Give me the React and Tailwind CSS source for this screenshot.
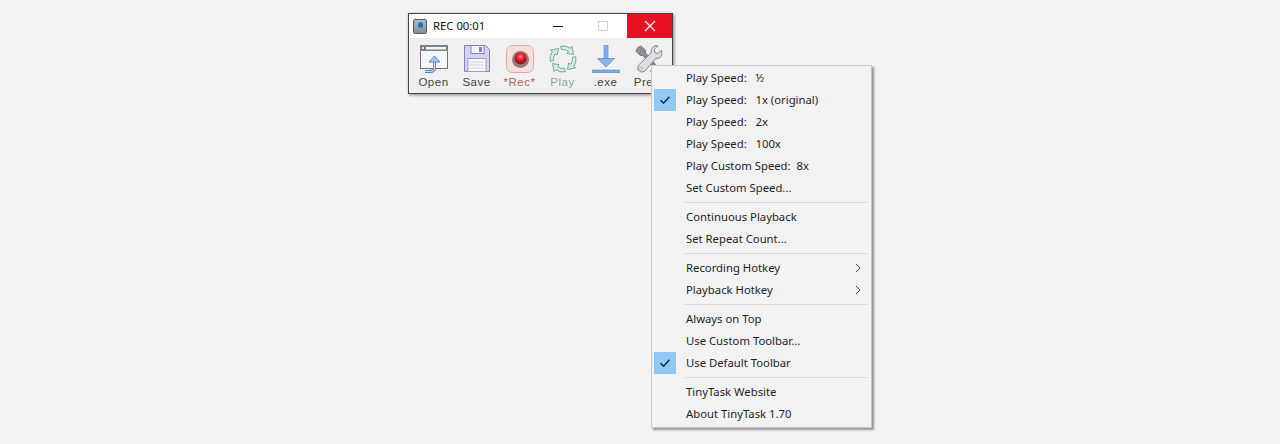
import React from "react";

function Check() {
  return (
    <svg width="22" height="22" viewBox="0 0 22 22" className="block">
      <path d="M6.5 11.2 L9.6 14.2 L15.4 7.8" fill="none" stroke="#12304f" strokeWidth="1.6" />
    </svg>
  );
}

function Item({ label, checked, arrow }) {
  return (
    <div className="flex h-[22px] items-center pl-[2px] pr-[10px]">
      <div className={`h-[22px] w-[22px] shrink-0 ${checked ? "bg-[#90c8f6]" : ""}`}>{checked ? <Check /> : null}</div>
      <span className="ml-[10px] flex-1 whitespace-pre text-[11.3px] leading-[22px] text-[#1f1f1f]">{label}</span>
      {arrow ? (
        <svg width="6" height="10" viewBox="0 0 6 10" className="block">
          <path d="M1 1 L5 5 L1 9" fill="none" stroke="#444" strokeWidth="1" />
        </svg>
      ) : null}
    </div>
  );
}

function Sep() {
  return (
    <div className="flex h-[7px] items-center pl-[33px] pr-[3px]">
      <div className="h-px w-full bg-[#dadada]" />
    </div>
  );
}

function Tool({ label, color, children }) {
  return (
    <div className="flex w-[43px] shrink-0 flex-col items-center">
      <div className="h-[28px] w-[28px]">{children}</div>
      <span className={`mt-[2px] whitespace-nowrap font-['Liberation_Sans',sans-serif] text-[11.5px] leading-[14px] tracking-[0.5px] ${color}`}>{label}</span>
    </div>
  );
}

const OpenIcon = (
  <svg width="28" height="28" viewBox="0 0 28 28">
    <rect x="0.5" y="0.5" width="27" height="23" fill="#f6f6f6" stroke="#6a727c" strokeWidth="1" />
    <rect x="0" y="0" width="28" height="6" fill="#79818a" />
    <rect x="6" y="2" width="20" height="2.5" fill="#f6f6f6" />
    <rect x="2" y="2" width="2" height="2" fill="#e0e0e0" />
    <path d="M5 26.5 H10 Q14.5 26.5 14.5 22 V16" fill="none" stroke="#4f80c4" strokeWidth="3" />
    <path d="M5 26.5 H10 Q14.5 26.5 14.5 22 V16" fill="none" stroke="#cfe0f6" strokeWidth="1.2" />
    <path d="M9 17 L14.5 11 L20 17 Z" fill="#a8c8f0" stroke="#4f80c4" strokeWidth="0.9" />
  </svg>
);
const SaveIcon = (
  <svg width="28" height="28" viewBox="0 0 28 28">
    <path d="M1.5 0.5 H22.5 L26.5 4.5 V26.5 H1.5 Z" fill="#d3d2f3" stroke="#8484bb" strokeWidth="1" />
    <rect x="8" y="0.5" width="13" height="8" fill="#f4f4fb" stroke="#8484bb" strokeWidth="1" />
    <rect x="16" y="2" width="3" height="5" fill="#8a8ac2" />
    <rect x="5" y="13.5" width="18" height="13" fill="#fafafa" stroke="#9a9aca" strokeWidth="1" />
    <path d="M7 17 H21 M7 20 H21 M7 23 H21" stroke="#c8d0d8" strokeWidth="1" />
  </svg>
);
const RecIcon = (
  <svg width="28" height="28" viewBox="0 0 28 28">
    <defs>
      <radialGradient id="recg" cx="50%" cy="35%" r="60%">
        <stop offset="0%" stopColor="#ff9a9a" />
        <stop offset="45%" stopColor="#e81c2c" />
        <stop offset="100%" stopColor="#8e1018" />
      </radialGradient>
    </defs>
    <rect x="0.5" y="0.5" width="27" height="27" rx="6" fill="#fbdedb" stroke="#d8aeac" strokeWidth="1" />
    <circle cx="14.5" cy="14.5" r="8.5" fill="#8f7d78" />
    <circle cx="14.5" cy="13.5" r="6" fill="url(#recg)" />
  </svg>
);
const arcArrow = "M11.7 1.2 A13 13 0 0 1 21.5 3.4 L22.9 1.3 L24.5 9.5 L18 8.3 L19.4 6.2 A9.5 9.5 0 0 0 12.3 4.6 Z";
const PlayIcon = (
  <svg width="28" height="28" viewBox="0 0 28 28" fill="#d6ecdf" stroke="#7dab96" strokeWidth="1">
    <path d={arcArrow} />
    <path d={arcArrow} transform="rotate(90 14 14)" />
    <path d={arcArrow} transform="rotate(180 14 14)" />
    <path d={arcArrow} transform="rotate(270 14 14)" />
  </svg>
);
const ExeIcon = (
  <svg width="28" height="28" viewBox="0 0 28 28">
    <rect x="12" y="0.5" width="4" height="14" fill="#7eaee6" stroke="#6a93c4" strokeWidth="0.7" />
    <path d="M5.5 13.5 H22.5 L14 22 Z" fill="#85b4ea" stroke="#5f90cc" strokeWidth="0.8" />
    <rect x="0.5" y="25" width="27" height="3" fill="#7ea9dc" stroke="#5f8cc0" strokeWidth="0.6" />
  </svg>
);
const PrefsIcon = (
  <svg width="28" height="28" viewBox="0 0 32 32">
    <path d="M3 3 L7 1 L12 6 L12 9 L26 25 L23 28 L9 12 L6 12 L1 7 Z" fill="#8e9096" stroke="#66686e" strokeWidth="0.9" />
    <path d="M30 6 L26 10 L22.5 8.5 L22 5 L26 1 C21 0 17.5 4 18.5 9 L4 23 L3 28 L7 31 L11 30 L24 15 C29 16.5 32 11 30 6 Z" fill="#dcdee4" stroke="#74777f" strokeWidth="1" />
    <circle cx="7" cy="27" r="1.6" fill="#fff" stroke="#777" strokeWidth="0.6" />
    <path d="M17 31 L20 23 L26 28 Z" fill="#f0567a" />
  </svg>
);

export default function App() {
  return (
    <div className="relative h-[444px] w-[1280px] overflow-hidden bg-[#f3f3f3] font-['Noto_Sans',sans-serif]">
      {/* toolbar window */}
      <div className="absolute left-[408px] top-[13px] flex h-[81px] w-[265px] flex-col border border-[#444] bg-[#f0f0f0] shadow-[1px_1px_3px_rgba(0,0,0,0.45)]">
        <div className="flex h-[24px] shrink-0 items-center bg-white">
          <div className="ml-[4px] flex h-[15px] w-[14px] items-start justify-center rounded-[2px] border border-[#55585e] bg-gradient-to-b from-[#b8bcc2] to-[#8a8e95] pt-[2px]">
            <div className="h-[6px] w-[5px] rounded-full bg-[#1f78c4]" />
          </div>
          <span className="ml-[6px] text-[11.3px] leading-[24px] text-[#111]">REC 00:01</span>
          <div className="ml-auto flex h-[24px]">
            <div className="flex w-[42px] items-center justify-center">
              <div className="h-px w-[10px] bg-[#111]" />
            </div>
            <div className="flex w-[48px] items-center justify-center">
              <div className="h-[10px] w-[10px] border border-[#cfcfcf]" />
            </div>
            <div className="flex w-[45px] items-center justify-center bg-[#e81123]">
              <svg width="12" height="12" viewBox="0 0 12 12">
                <path d="M1 1 L11 11 M11 1 L1 11" stroke="#fff" strokeWidth="1.2" />
              </svg>
            </div>
          </div>
        </div>
        <div className="flex pl-[3px] pt-[7px]">
          <Tool label="Open" color="text-[#444]">{OpenIcon}</Tool>
          <Tool label="Save" color="text-[#444]">{SaveIcon}</Tool>
          <Tool label="*Rec*" color="text-[#c4605c]">{RecIcon}</Tool>
          <Tool label="Play" color="text-[#86a896]">{PlayIcon}</Tool>
          <Tool label=".exe" color="text-[#444]">{ExeIcon}</Tool>
          <Tool label="Prefs" color="text-[#444]">{PrefsIcon}</Tool>
        </div>
      </div>

      {/* context menu */}
      <div className="absolute left-[651px] top-[65px] h-[363px] w-[221px] border border-[#c9c9c9] bg-[#f2f2f2] pt-[1px] shadow-[2px_2px_2px_rgba(0,0,0,0.4)]">
        <Item label="Play Speed:   ½" />
        <Item label="Play Speed:   1x (original)" checked />
        <Item label="Play Speed:   2x" />
        <Item label="Play Speed:   100x" />
        <Item label="Play Custom Speed:  8x" />
        <Item label="Set Custom Speed..." />
        <Sep />
        <Item label="Continuous Playback" />
        <Item label="Set Repeat Count..." />
        <Sep />
        <Item label="Recording Hotkey" arrow />
        <Item label="Playback Hotkey" arrow />
        <Sep />
        <Item label="Always on Top" />
        <Item label="Use Custom Toolbar..." />
        <Item label="Use Default Toolbar" checked />
        <Sep />
        <Item label="TinyTask Website" />
        <Item label="About TinyTask 1.70" />
      </div>
    </div>
  );
}
